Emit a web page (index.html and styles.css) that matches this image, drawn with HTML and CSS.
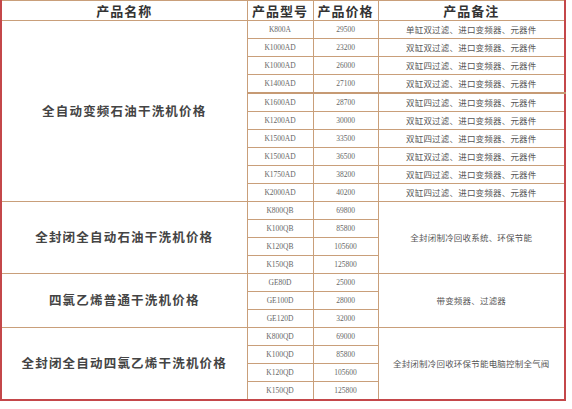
FILE: index.html
```html
<!DOCTYPE html>
<html lang="zh-CN">
<head>
<meta charset="utf-8">
<link rel="stylesheet" href="styles.css">
</head>
<body>
<table class="price">
<colgroup><col class="c1"><col class="c2"><col class="c3"><col class="c4"></colgroup>
<thead>
<tr class="head"><th>产品名称</th><th>产品型号</th><th>产品价格</th><th>产品备注</th></tr>
</thead>
<tbody>
<tr><td class="name" rowspan="10">全自动变频石油干洗机价格</td><td class="m">K800A</td><td class="m">29500</td><td class="r">单缸双过滤、进口变频器、元器件</td></tr>
<tr><td class="m">K1000AD</td><td class="m">23200</td><td class="r">双缸双过滤、进口变频器、元器件</td></tr>
<tr><td class="m">K1000AD</td><td class="m">26000</td><td class="r">双缸四过滤、进口变频器、元器件</td></tr>
<tr><td class="m">K1400AD</td><td class="m">27100</td><td class="r">双缸双过滤、进口变频器、元器件</td></tr>
<tr class="thick"><td class="m">K1600AD</td><td class="m">28700</td><td class="r">双缸四过滤、进口变频器、元器件</td></tr>
<tr><td class="m">K1200AD</td><td class="m">30000</td><td class="r">双缸双过滤、进口变频器、元器件</td></tr>
<tr><td class="m">K1500AD</td><td class="m">33500</td><td class="r">双缸四过滤、进口变频器、元器件</td></tr>
<tr><td class="m">K1500AD</td><td class="m">36500</td><td class="r">双缸双过滤、进口变频器、元器件</td></tr>
<tr><td class="m">K1750AD</td><td class="m">38200</td><td class="r">双缸四过滤、进口变频器、元器件</td></tr>
<tr><td class="m">K2000AD</td><td class="m">40200</td><td class="r">双缸四过滤、进口变频器、元器件</td></tr>

<tr><td class="name" rowspan="4">全封闭全自动石油干洗机价格</td><td class="m">K800QB</td><td class="m">69800</td><td class="r" rowspan="4">全封闭制冷回收系统、环保节能</td></tr>
<tr><td class="m">K100QB</td><td class="m">85800</td></tr>
<tr><td class="m">K120QB</td><td class="m">105600</td></tr>
<tr><td class="m">K150QB</td><td class="m">125800</td></tr>

<tr><td class="name" rowspan="3">四氯乙烯普通干洗机价格</td><td class="m">GE80D</td><td class="m">25000</td><td class="r" rowspan="3">带变频器、过滤器</td></tr>
<tr><td class="m">GE100D</td><td class="m">28000</td></tr>
<tr><td class="m">GE120D</td><td class="m">32000</td></tr>

<tr><td class="name" rowspan="4">全封闭全自动四氯乙烯干洗机价格</td><td class="m">K800QD</td><td class="m">69000</td><td class="r" rowspan="4">全封闭制冷回收环保节能电脑控制全气阀</td></tr>
<tr><td class="m">K100QD</td><td class="m">85800</td></tr>
<tr><td class="m">K120QD</td><td class="m">105600</td></tr>
<tr><td class="m">K150QD</td><td class="m">125800</td></tr>
</tbody>
</table>
</body>
</html>
```
FILE: styles.css
```css
html, body {
  margin: 0;
  padding: 0;
  background: #ffffff;
}
body {
  font-family: "Noto Sans CJK SC", "Liberation Sans", sans-serif;
  color: #333;
}
.price {
  border-collapse: collapse;
  width: 566px;
  table-layout: fixed;
  border: 2px solid #c4474a;
  border-top-width: 1px;
}
.c1 { width: 246px; }
.c2 { width: 66px; }
.c3 { width: 65px; }
.c4 { width: auto; }
.price th, .price td {
  border: 1px solid #c99f7a;
  padding: 0;
  text-align: center;
  vertical-align: middle;
  line-height: 1;
}
.head th {
  height: 19px;
  font-size: 13px;
  font-weight: 700;
  letter-spacing: 1px;
  color: #333;
}
.price td.m {
  height: 17px;
  font-family: "Liberation Serif", serif;
  font-size: 7.5px;
  color: #666;
}
.price td.r {
  font-size: 8.5px;
  color: #555;
  letter-spacing: 0.2px;
}
.price td.name {
  font-size: 12.5px;
  font-weight: 700;
  letter-spacing: 1.2px;
  color: #444;
}
.thick td {
  border-top: 2px solid #c69a74;
}
```
